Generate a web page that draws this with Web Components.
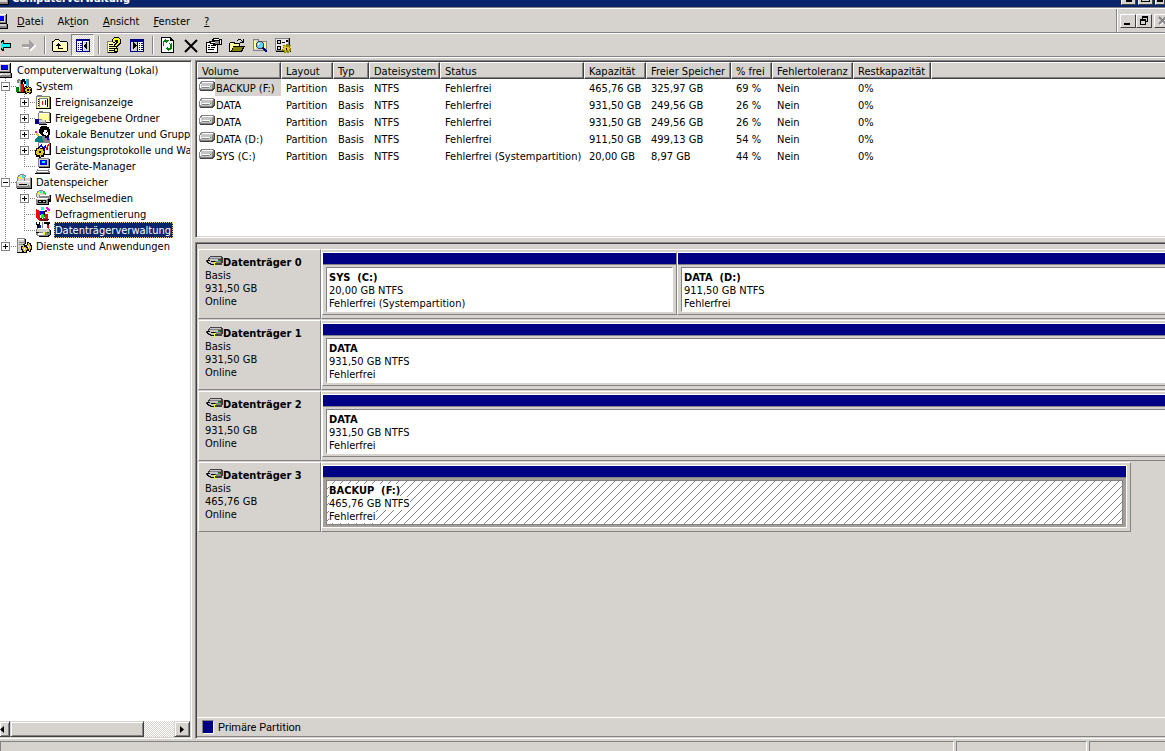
<!DOCTYPE html>
<html lang="de">
<head>
<meta charset="utf-8">
<title>Computerverwaltung</title>
<style>
  html, body {
    margin: 0;
    height: 100%;
    overflow: hidden;
  }
  body {
    --face: #d6d3ce;
    --shadow: #848284;
    --dark: #424142;
    --navy: #08246b;
    --disk: #000084;
    background: var(--face);
    color: #000;
    font: 11px/13px "DejaVu Sans Condensed", "Noto Sans", sans-serif;
    cursor: default;
  }
</style>
</head>
<body>
<management-console></management-console>

<script>
const ICONS = {
  computer: `
    <path fill="#848284" d="M2 1h11v9H2z"/><path fill="#d6d3ce" d="M3 1h9v8H3z"/><path fill="#000" d="M13 1h1v10h-1zM3 10h11v1H3z"/>
    <path fill="#fff" d="M2 1h11v1H2z"/><path fill="#000084" d="M4 3h7v5H4z"/><path fill="#0000ff" d="M5 3h6v4H5z"/>
    <path fill="#848284" d="M1 11h13v4H1z"/><path fill="#d6d3ce" d="M1 11h12v2H1z"/><path fill="#000" d="M1 15h14v1H1zM14 11h1v4h-1z"/><path fill="#fff" d="M2 12h3v1H2z"/>`,
  back: `<path fill="#000" d="M6 3h2v3h7v5H8v3H6v-1H5v-1H4v-1H3v-1H2V9H1V8h1V7h1V6h1V5h1V4h1z"/><path fill="#00ffff" d="M6 5h1v2h7v3H7v2H6v-1H5v-1H4V9H3V8h1V7h1V6h1z"/>`,
  forward: `<path fill="#fff" d="M9 4h1v1h1v1h1v1h1v1h2v2h-1v1h-1v1h-1v1h-1v1H9v-3H2v-2h7z"/><path fill="#a5a2a5" d="M8 3h1v1h1v1h1v1h1v1h1v2h-1v1h-1v1h-1v1H9v1H8v-3H1V7h7z"/>`,
  up: `<path fill="#000" d="M2 3h1V2h4v1h1v1h7v1h1v9h-1v1H1v-1H0V4h2z"/><path fill="#ffffb5" d="M3 3h4v1h1v1h7v9H1V5h1V4h1z"/><path fill="#fff" d="M2 5h12v1H2zM1 6h1v7H1z"/><path fill="#000" d="M6 6h1v1h1v1h1v1H7v2h4v1H6V9H4V8h1V7h1z"/>`,
  tree: `<path fill="#000084" d="M1 2h14v13H1z"/><path fill="#fff" d="M2 4h5v10H2zM8 4h6v10H8z"/><path fill="#d6d3ce" d="M9 5h5v9H9z"/><path fill="#000084" d="M3 6h1v1H3zM5 6h2v1H5zM3 8h1v1H3zM5 8h2v1H5zM3 10h1v1H3zM5 10h2v1H5zM3 12h1v1H3zM5 12h2v1H5z"/><path fill="#000" d="M12 5v7h-1v-1h-1v-1H9V8h1V7h1V5z"/>`,
  help: `<path fill="#848284" d="M1 4h9v12H1z"/><path fill="#ffffb5" d="M2 5h8v10H2z"/><path fill="#000" d="M10 8h1v8H2v-1h8zM3 7h4v1H3zM3 9h5v1H3zM3 11h5v1H3zM3 13h5v1H3z"/>
    <path fill="#000" d="M8 0h5v1h1v1h1v5h-1v1h-1v1h-1v1H8V7h1V6h1V5H9v1H7V5H6V2h1V1h1z"/><path fill="#ffff00" d="M8 1h5v1h1v4h-1v1h-1v1h-1v1H9V8h1V7h1V6h1V3H9v2H7V2h1z"/><path fill="#000" d="M8 11h4v4H8z"/><path fill="#ffff00" d="M9 12h2v2H9z"/>`,
  pane: `<path fill="#000084" d="M1 2h14v13H1z"/><path fill="#d6d3ce" d="M2 5h6v9H2z"/><path fill="#fff" d="M9 5h5v9H9z"/><path fill="#000" d="M4 5h1v1h1v1h1v1h1v1H7v1H6v1H5v1H4z"/><path fill="#000084" d="M10 6h1v1h-1zM12 6h2v1h-2zM10 8h1v1h-1zM12 8h2v1h-2zM10 10h1v1h-1zM12 10h2v1h-2zM10 12h1v1h-1zM12 12h2v1h-2z"/>`,
  refresh: `<path fill="#000" d="M1 0h10v1h1v1h1v1h1v13H1z"/><path fill="#fff" d="M2 1h8v3h3v11H2z"/><path fill="#008200" d="M8 2v1H6V2H5v1H4v1H3v5h1V5h2v1h1V5h1V4h1V3H8zM9 6h1v1h1V6h1v6h-1v1H9v1H8v-1H7v-1H6v-1h1v-1h1v1h2V7H9z"/><path fill="#000" d="M10 1h1v2h2v1h-3z"/>`,
  remove: `<path d="M2 3l12 12M14 3L2 15" stroke="#000" stroke-width="2" fill="none" shape-rendering="auto"/>`,
  props: `<path fill="#000" d="M0 5h12v11H0z"/><path fill="#fff" d="M1 6h10v9H1z"/><path fill="#000" d="M2 8h2v1H2zM5 8h4v1H5zM2 10h2v1H2zM5 10h4v1H5zM2 12h6v1H2z"/><path fill="#000" d="M7 1h6v1h3v6h-3V8h-3v1H7V7H4V6H3V4h3V2h1z"/><path fill="#fff" d="M8 2h5v1H8zM5 5h4v1H5zM14 3h1v4h-1z"/><path fill="#848284" d="M9 4h4v3H9z"/>`,
  open: `<path fill="#000" d="M1 5h5v1h5v3h5v1h-1v2h-1v2h-1v1H0V6h1z"/><path fill="#ffff9c" d="M1 6h4v1h5v2H4v2H3v2H2v1H1z"/><path fill="#848200" d="M4 10h10v1h-1v2h-1v1H3v-1h1z"/><path fill="#000" d="M9 2h3v1h1v1h1V2h1v4h-4V5h2V4h-1V3H9v1H8V3h1z"/>`,
  find: `<path fill="#848284" d="M1 2h6v2h8v10H1z"/><path fill="#d6d3ce" d="M2 3h4v2h8v8H2z"/><path fill="#ffff9c" d="M2 4h2v8H2zM12 5h2v6h-2z"/><circle cx="8" cy="8" r="4" fill="#424142"/><circle cx="8" cy="8" r="3" fill="#63cfff"/><path fill="#fff" d="M6 6h2v1H7v1H6z"/><path d="M11 11l4 4" stroke="#000084" stroke-width="2"/>`,
  settings: `<path fill="#848284" d="M0 1h14v13H0z"/><path fill="#e7e7e7" d="M1 2h12v11H1z"/><path fill="#000" d="M14 1h1v7h-1zM1 14h8v1H1zM2 3h4v4H2zM7 5h3v1H7zM2 9h4v4H2zM11 3h2v2h-2z"/><path fill="#d6d3ce" d="M3 4h2v2H3zM3 10h2v2H3z"/><path fill="#848200" d="M8 8h2v1h1V7h2v1h2V8h1v1h-1v2h1v3h-2v2h-2v-1h-1v1h-2v-2H7v-2h1z"/><path fill="#e7c321" d="M8 9h2V8h1v2h3v1h1v1h-1v2h-1v-1h-2v2h-1v-2H8v-2h1z"/><path fill="#000" d="M11 11h1v2h-1zM7 14h1v1H7zM15 14h1v1h-1z"/>`,
  system: `<path fill="#848284" d="M2 1h2v1h2v3H5v9H3V5H1V2h1z"/><path fill="#d6d3ce" d="M3 3h1v10H3z"/><path fill="#008200" d="M0 9h3v5H0z"/><path fill="#f00" d="M5 6h3v9H5z"/><path fill="#840000" d="M7 7h1v8H7z"/><path fill="#000" d="M6 1h3v2h1v3H8V4H7v2H5V2h1zM1 14h8v1H1z"/><path fill="#0cf" d="M10 1h1v7h-1z"/><path fill="#848284" d="M11 1h2v7h-2z"/><path fill="#000" d="M8 9h1V8h2v1h1V8h1v1h2v1h1v5h-1v1h-2v-1h-2v1H9v-2H8z"/><path fill="#e7c321" d="M9 9h1v1h2V9h1v1h2v1h-1v2h1v1h-1v1h-1v-1h-2v1h-1v-2H9v-2h1v-1H9z"/><path fill="#000" d="M11 11h2v2h-2z"/>`,
  events: `<path fill="#848284" d="M1 2h1V1h5v1h8v12H1z"/><path fill="#ffff9c" d="M2 3h12v11H2z"/><path fill="#000" d="M15 3h1v12H1v-1h14z"/><path fill="#848284" d="M4 4h9v9H4z"/><path fill="#fff" d="M5 5h8v8H5z"/><path fill="#000" d="M3 5h1v1H3zM3 7h1v1H3zM3 9h1v1H3zM3 11h1v1H3zM12 5h1v8h-1z"/><path fill="#f00" d="M7 7h1v4H7z"/><path fill="#00f" d="M10 6h1v5h-1z"/>`,
  share: `<path fill="#848284" d="M3 3h1V1h4v1h7v9H3z"/><path fill="#ffff9c" d="M4 3h10v8H4z"/><path fill="#fff" d="M4 3h10v1H4z"/><path fill="#000" d="M15 3h1v10H8v-1h7z"/><path fill="#000084" d="M0 9h4v5H0z"/><path fill="#848284" d="M4 9h3v1h4v4H4z"/><path fill="#d6d3ce" d="M4 10h6v2H4z"/><path fill="#000" d="M4 14h8v1H4z"/>`,
  users: `<path fill="#000" d="M6 0h6v1h2v2h1v6h-1v2h-2v1H9l-3-3-2-2V3h1V1h1z"/><path fill="#fff" d="M9 4h3v2h1v3h-1v1h-1V9H9V8H8V6h1z"/><path fill="#000" d="M11 6h1v1h-1z"/><path fill="#f0f" d="M0 5h2v2H0z"/><path fill="#e7c321" d="M1 7h2v1h1v2h1v1H3v-1H2V9H1z"/><path fill="#008284" d="M0 13l3-3h3l3 3v3H0z"/><path fill="#848284" d="M7 10h3v2h3v1h2v3H8z"/><path fill="#00f" d="M12 11h2v3h-2z"/>`,
  perf: `<path fill="#848284" d="M3 0h12v12H3z"/><path fill="#fff" d="M4 1h10v11H4z"/><path fill="#000" d="M15 1h1v12H9v-1h6z"/><path fill="#00f" d="M4 4h1V3h1V2h1v2h1v2h1V4h1V3h1v4h1V5h1v3h-2V6h-1v2H8V6H7V5H5v1H4z"/><path fill="#f00" d="M11 5h1V3h1V2h1v2h-1v2h-1v2h-1z"/><path fill="#000" d="M1 6h2V5h2v1h2V5h2v3h1v5H9v2H6v1H4v-1H1v-2H0V8h1z"/><path fill="#e7c321" d="M2 7h2V6h1v1h3v2h1v2H8v2H6v2H5v-2H2v-1H1V9h1z"/><path fill="#000" d="M4 9h2v2H4z"/>`,
  devices: `<path fill="#848284" d="M3 0h11v9H3z"/><path fill="#d6d3ce" d="M4 1h9v7H4z"/><path fill="#00f" d="M5 2h7v5H5z"/><path fill="#0ff" d="M7 3h3v2H7z"/><path fill="#000" d="M14 1h1v9H4V9h10z"/><path fill="#848284" d="M2 11h12v2H2zM1 13h14v2H1z"/><path fill="#fff" d="M3 11h10v1H3zM2 13h11v1H2z"/><path fill="#000" d="M0 15h15v1H0z"/>`,
  storage: `<circle cx="6" cy="5" r="5" fill="#848284"/><circle cx="6" cy="5" r="4" fill="#d6d3ce"/><path fill="#ff0" d="M2 3h3v2H3z"/><path fill="#0ff" d="M6 1h2v3H6z"/><path fill="#848284" d="M8 3h7v4H8z"/><path fill="#d6d3ce" d="M9 4h5v3H9z"/><path fill="#fff" d="M9 3h5v1H9z"/><path fill="#848284" d="M0 7h15v7H0z"/><path fill="#d6d3ce" d="M1 8h13v4H1z"/><path fill="#fff" d="M1 7h13v1H1z"/><path fill="#000" d="M15 4h1v11H1v-1h14zM3 10h8v1H3z"/><path fill="#008200" d="M12 11h1v1h-1z"/>`,
  removable: `<circle cx="6" cy="5" r="5" fill="#848284"/><circle cx="6" cy="5" r="4" fill="#d6d3ce"/><path fill="#ff0" d="M3 2h2v2H3z"/><path fill="#0f0" d="M8 2h2v2H8z"/><path fill="#0ff" d="M5 1h2v2H5z"/><path fill="#848284" d="M4 5h11v4H4zM1 8h12v7H1z"/><path fill="#d6d3ce" d="M2 9h10v1H2z"/><path fill="#fff" d="M5 5h9v1H5zM1 8h12v1H1z"/><path fill="#000" d="M15 5h1v7h-2v3H2v-1h11V9h2zM3 10h8v3H3z"/><path fill="#d6d3ce" d="M4 11h2v1H4zM8 11h2v1H8z"/>`,
  defrag: `<path fill="#f00" d="M1 3l4 2v10l-4-3z"/><path fill="#840000" d="M5 13h8v2H5z"/><path fill="#00f" d="M5 5h4v4H5z"/><path fill="#0f0" d="M6 8h3v4H6z"/><path fill="#008200" d="M8 8h3v5H8v-1h2z"/><path fill="#f00" d="M10 8h3v5h-2v-3h-1z"/><path fill="#0ff" d="M6 1h3v3H6z"/><path fill="#f0f" d="M11 1h2v1h1v1h1v2h-2V4h-1V3h-1z"/><path fill="#000" d="M9 5h1v4H9zM5 12h2v1H5zM13 13h1v1h-1z"/><path fill="#ff0" d="M12 6h3v1h-3z"/><path fill="#840084" d="M10 4h2v2h-2z"/>`,
  diskmgmt: `<path fill="#000" d="M1 0h1v2h2V0h1v3H4v3H2V3H1z"/><path fill="#00f" d="M4 3h2v4H4z"/><path fill="#848284" d="M7 0h1v6H7z"/><path fill="#f00" d="M12 3h2v4h-2z"/><path fill="#000" d="M9 0h6v2h-1v1h-2V2H9z"/><path fill="#848284" d="M2 6h12v1h1v6h-1v1H2v-1H1V7h1z"/><path fill="#d6d3ce" d="M2 7h12v3H2z"/><path fill="#fff" d="M3 6h10v1H3z"/><path fill="#000" d="M15 8h1v5h-1v1h-1v1H4v-1h9v-1h2zM1 10h3v1H1z"/><path fill="#fff" d="M3 11h5v2H3z"/><path fill="#ff0" d="M8 10h2v3H8z"/><path fill="#008200" d="M12 10h2v1h-2z"/>`,
  services: `<path fill="#848284" d="M1 0h8v14H1z"/><path fill="#d6d3ce" d="M2 1h6v13H2z"/><path fill="#fff" d="M2 1h6v1H2z"/><path fill="#848284" d="M3 4h5v1H3zM3 6h5v1H3z"/><path fill="#000" d="M1 14h8v1H1zM9 1h1v5H9z"/><path fill="#000" d="M5 8h2V6h2v1h2V4h2v1h2v2h1v5h-1v2h-2v-1h-2v2H8v-1H6v-2H5z"/><path fill="#e7c321" d="M6 9h1V7h1v2h2v1h1v2h-1v2H8v-1H7v-2H6zM12 5h1v1h1v2h1v3h-1v2h-1v-2h-1V9h-1V7h1z"/><path fill="#fff" d="M8 10h1v2H8zM12 8h1v2h-1z"/>`
};

// Flat grey drive, used in front of every volume
const DRIVE = `<svg width="16" height="11" viewBox="0 0 16 11" shape-rendering="crispEdges" aria-hidden="true">
  <path fill="#848284" d="M2 0h13v1h1v7h-1v1h-1v1H1V9H0V3h1V1h1z"/><path fill="#fff" d="M3 1h11v1H3zM1 3h1v4H1z"/>
  <path fill="#c6c3c6" d="M2 2h12v1h-1v5H2z"/><path fill="#848284" d="M3 6h7v1H3z"/><path fill="#fff" d="M3 5h8v1H3z"/>
  <path fill="#00c300" d="M11 5h1v1h-1z"/><path fill="#424142" d="M15 1h1v7h-1v1h-1v1H1V9h12V8h1V7h1z"/></svg>`;

const DISK = `<svg width="17" height="12" viewBox="0 0 17 12" shape-rendering="crispEdges" aria-hidden="true">
  <path fill="#424142" d="M4 0h12v1h1v6h-1v2H4V8H2V6H0V4h2V2h1V1h1z"/><path fill="#c6c3c6" d="M4 1h11v1H4zM3 3h9v2H3z"/>
  <path fill="#848284" d="M4 2h11v1H4zM10 5h5v2h-5z"/><path fill="#000" d="M1 4h3v1h5v4H5V8H3V7H1z"/><path fill="#c6c3c6" d="M2 5h3v1h3v2H5V7H3V6H2z"/>
  <path fill="#ff0" d="M8 6h1v4H8zM9 6h1v1H9z"/><path fill="#00c300" d="M12 4h2v1h-2z"/></svg>`;

class PixelIcon extends HTMLElement {
  connectedCallback() {
    this.attachShadow({ mode: 'open' }).innerHTML = `
      <style>
        :host { display: block; flex: none; width: 16px; height: 16px; }
        svg { display: block; }
      </style>
      <svg width="16" height="16" viewBox="0 0 16 16" shape-rendering="crispEdges" aria-hidden="true">${ICONS[this.getAttribute('name')]}</svg>`;
  }
}
customElements.define('pixel-icon', PixelIcon);

class TitleBar extends HTMLElement {
  constructor() {
    super();
    this.attachShadow({ mode: 'open' }).innerHTML = `
      <style>
        :host {
          display: flex;
          align-items: flex-end;
          height: 7px;
          overflow: hidden;
          background: var(--navy);
          color: #fff;
        }
        .logo { width: 10px; display: flex; justify-content: flex-end; margin-bottom: 2px; }
        h1 { flex: 1; margin: 0 0 2px 2px; font-size: 11px; line-height: 13px; font-weight: bold; }
        .buttons { display: flex; gap: 2px; margin-bottom: 2px; }
        button {
          width: 15px;
          height: 14px;
          padding: 0;
          display: flex;
          align-items: flex-end;
          justify-content: center;
          background: var(--face);
          border: 1px solid #fff;
          border-right-color: var(--dark);
          border-bottom-color: var(--dark);
        }
        .close { width: 10px; }
        i { width: 6px; height: 2px; margin-bottom: 2px; background: #000; }
        .max i { width: 9px; height: 8px; box-sizing: border-box; background: none; border: 1px solid #000; }
      </style>
      <div class="logo"><pixel-icon name="computer"></pixel-icon></div>
      <h1>Computerverwaltung</h1>
      <div class="buttons">
        <button aria-label="Minimieren"><i></i></button>
        <button class="max" aria-label="Maximieren"><i></i></button>
        <button class="close" aria-label="Schließen"><i></i></button>
      </div>`;
  }
}
customElements.define('title-bar', TitleBar);

class MenuBar extends HTMLElement {
  constructor() {
    super();
    this.attachShadow({ mode: 'open' }).innerHTML = `
      <style>
        :host {
          display: flex;
          height: 23px;
          margin-top: 1px;
          border-top: 1px solid #fff;
          border-bottom: 1px solid var(--shadow);
          box-shadow: 0 -1px var(--shadow);
        }
        .logo { width: 9px; display: flex; align-items: center; justify-content: flex-end; overflow: hidden; }
        nav { flex: 1; display: flex; align-items: center; padding: 1px 0 0 1px; }
        button { font: inherit; padding: 0; border: 0; background: none; color: inherit; }
        nav button { padding: 2px 7px; }
        .window {
          display: flex;
          align-items: center;
          padding-left: 3px;
          border-left: 1px solid var(--shadow);
          box-shadow: inset 1px 0 #fff;
        }
        .window button {
          box-sizing: border-box;
          width: 16px;
          height: 14px;
          border: 1px solid #fff;
          border-right-color: var(--dark);
          border-bottom-color: var(--dark);
        }
        .window .close { width: 11px; margin-left: 2px; border-right: 0; }
        svg { display: block; }
      </style>
      <div class="logo"><pixel-icon name="computer"></pixel-icon></div>
      <nav>
        <button><u>D</u>atei</button>
        <button>Ak<u>t</u>ion</button>
        <button><u>A</u>nsicht</button>
        <button><u>F</u>enster</button>
        <button><u>?</u></button>
      </nav>
      <div class="window">
        <button aria-label="Minimieren"><svg width="14" height="12"><path d="M3 8h6v2H3z"/></svg></button>
        <button aria-label="Wiederherstellen"><svg width="14" height="12" shape-rendering="crispEdges"><path d="M5 1h6v6H9V6h1V3H6v1H5zM3 4h6v6H3zm1 2v3h4V6z" fill-rule="evenodd"/></svg></button>
        <button class="close" aria-label="Schließen"><svg width="10" height="12"><path d="M5 3l7 7M12 3l-7 7" stroke="#fff" stroke-width="2"/><path d="M4 2l7 7M11 2l-7 7" stroke="#848284" stroke-width="2"/></svg></button>
      </div>`;
  }
}
customElements.define('menu-bar', MenuBar);

class ToolBar extends HTMLElement {
  constructor() {
    super();
    const button = (name, label, cls = '') =>
      `<button class="${cls}" aria-label="${label}"><pixel-icon name="${name}"></pixel-icon></button>`;
    this.attachShadow({ mode: 'open' }).innerHTML = `
      <style>
        :host {
          display: flex;
          align-items: center;
          height: 22px;
          border-top: 1px solid #fff;
          border-bottom: 1px solid var(--shadow);
          box-shadow: 0 1px #fff;
        }
        button {
          box-sizing: border-box;
          width: 23px;
          height: 22px;
          padding: 0;
          display: flex;
          align-items: center;
          justify-content: center;
          border: 1px solid transparent;
          background: none;
        }
        .cut { width: 17px; overflow: hidden; justify-content: flex-end; padding-right: 4px; }
        .on {
          border-color: var(--shadow) #fff #fff var(--shadow);
          background: repeating-conic-gradient(#fff 0 25%, var(--face) 0 50%) 0 0 / 2px 2px;
        }
        hr {
          width: 1px;
          height: 18px;
          margin: 0 3px 0 4px;
          border: 0;
          background: var(--shadow);
          box-shadow: 1px 0 #fff;
        }
      </style>
      ${button('back', 'Zurück', 'cut')}
      ${button('forward', 'Vorwärts')}
      <hr>
      ${button('up', 'Aufwärts')}
      ${button('tree', 'Konsolenstruktur', 'on')}
      <hr>
      ${button('help', 'Hilfe')}
      ${button('pane', 'Aktionsbereich')}
      <hr>
      ${button('refresh', 'Aktualisieren')}
      ${button('remove', 'Löschen')}
      ${button('props', 'Eigenschaften')}
      ${button('open', 'Öffnen')}
      ${button('find', 'Durchsuchen')}
      ${button('settings', 'Einstellungen')}`;
  }
}
customElements.define('tool-bar', ToolBar);

// level 0-2, state is plus or minus, "last" ends the guide line of its level
class TreeItem extends HTMLElement {
  connectedCallback() {
    const level = Number(this.getAttribute('level'));
    const state = this.getAttribute('state');
    const last = this.hasAttribute('last') ? 'last' : '';
    const box = state ? `<button class="${state}" aria-label="Auf- oder zuklappen"></button>` : '';
    let guides = '';
    if (level === 2) guides += '<span class="guide pass"></span>';
    if (level > 0) guides += `<span class="guide node ${last}">${box}</span>`;
    this.attachShadow({ mode: 'open' }).innerHTML = `
      <style>
        :host { display: flex; height: 16px; align-items: center; white-space: nowrap; }
        .guide {
          --dots: repeating-linear-gradient(#848284 0 1px, transparent 1px 2px);
          flex: none;
          display: flex;
          align-items: center;
          height: 16px;
          background: var(--dots) 5px 0 / 1px 16px no-repeat;
        }
        .pass { width: 19px; }
        .node {
          width: 16px;
          background:
            var(--dots) 5px 0 / 1px 16px no-repeat,
            repeating-linear-gradient(90deg, #848284 0 1px, transparent 1px 2px) 5px 8px / 11px 1px no-repeat;
        }
        .node.last {
          background:
            var(--dots) 5px 0 / 1px 8px no-repeat,
            repeating-linear-gradient(90deg, #848284 0 1px, transparent 1px 2px) 5px 8px / 11px 1px no-repeat;
        }
        button {
          box-sizing: border-box;
          width: 9px;
          height: 9px;
          margin: 1px 0 0 1px;
          padding: 0;
          border: 1px solid #848284;
          background: linear-gradient(#000, #000) 1px 3px / 5px 1px no-repeat #fff;
        }
        .plus {
          background:
            linear-gradient(#000, #000) 1px 3px / 5px 1px no-repeat,
            linear-gradient(#000, #000) 3px 1px / 1px 5px no-repeat #fff;
        }
        .icon { flex: none; width: ${level ? 16 : 13}px; display: flex; justify-content: flex-end; overflow: hidden; }
        .text { box-sizing: border-box; height: 16px; margin-left: 3px; padding: 1px 2px 0 1px; line-height: 15px; }
        :host([selected]) .text { background: var(--navy); color: #fff; outline: 1px dotted #e7c384; outline-offset: -1px; }
      </style>
      ${guides}<span class="icon"><pixel-icon name="${this.getAttribute('icon')}"></pixel-icon></span>
      <span class="text"><slot></slot></span>`;
  }
}
customElements.define('tree-item', TreeItem);

class ConsoleTree extends HTMLElement {
  constructor() {
    super();
    this.attachShadow({ mode: 'open' }).innerHTML = `
      <style>
        :host {
          display: flex;
          flex-direction: column;
          min-width: 0;
          background: #fff;
          border-top: 1px solid var(--shadow);
          border-right: 1px solid #fff;
          border-bottom: 1px solid #fff;
          box-shadow: inset 0 1px var(--dark), inset -1px -1px var(--face);
        }
        .items { flex: 1; margin: 1px 1px 0 0; overflow: hidden; }
        .scroll {
          display: grid;
          grid-template-columns: 10px 134px 1fr 16px;
          height: 16px;
          margin: 0 1px 1px 0;
          background: repeating-conic-gradient(#fff 0 25%, var(--face) 0 50%) 0 0 / 2px 2px;
        }
        .scroll button, .thumb {
          padding: 0;
          display: flex;
          align-items: center;
          justify-content: center;
          background: var(--face);
          border: 1px solid var(--face);
          border-right-color: var(--dark);
          border-bottom-color: var(--dark);
          box-shadow: inset 1px 1px #fff, inset -1px -1px var(--shadow);
        }
        .scroll button:first-child { border-left: 0; justify-content: flex-start; }
      </style>
      <div class="items">
        <tree-item level="0" icon="computer">Computerverwaltung (Lokal)</tree-item>
        <tree-item level="1" state="minus" icon="system">System</tree-item>
        <tree-item level="2" state="plus" icon="events">Ereignisanzeige</tree-item>
        <tree-item level="2" state="plus" icon="share">Freigegebene Ordner</tree-item>
        <tree-item level="2" state="plus" icon="users">Lokale Benutzer und Gruppe</tree-item>
        <tree-item level="2" state="plus" icon="perf">Leistungsprotokolle und War</tree-item>
        <tree-item level="2" last icon="devices">Geräte-Manager</tree-item>
        <tree-item level="1" state="minus" icon="storage">Datenspeicher</tree-item>
        <tree-item level="2" state="plus" icon="removable">Wechselmedien</tree-item>
        <tree-item level="2" icon="defrag">Defragmentierung</tree-item>
        <tree-item level="2" last selected icon="diskmgmt">Datenträgerverwaltung</tree-item>
        <tree-item level="1" last state="plus" icon="services">Dienste und Anwendungen</tree-item>
      </div>
      <div class="scroll">
        <button aria-label="Nach links"><svg width="4" height="7"><path d="M4 0v7L0 3.5z"/></svg></button>
        <div class="thumb"></div>
        <span></span>
        <button aria-label="Nach rechts"><svg width="4" height="7"><path d="M0 0v7l4-3.5z"/></svg></button>
      </div>`;
  }
}
customElements.define('console-tree', ConsoleTree);

class VolumeList extends HTMLElement {
  constructor() {
    super();
    const columns = [
      ['Volume', 84], ['Layout', 52], ['Typ', 36], ['Dateisystem', 71], ['Status', 144],
      ['Kapazität', 62], ['Freier Speicher', 85], ['% frei', 41], ['Fehlertoleranz', 81], ['Restkapazität', 78]
    ];
    const volumes = [
      ['BACKUP (F:)', 'Fehlerfrei', '465,76 GB', '325,97 GB', '69 %'],
      ['DATA', 'Fehlerfrei', '931,50 GB', '249,56 GB', '26 %'],
      ['DATA', 'Fehlerfrei', '931,50 GB', '249,56 GB', '26 %'],
      ['DATA (D:)', 'Fehlerfrei', '911,50 GB', '499,13 GB', '54 %'],
      ['SYS (C:)', 'Fehlerfrei (Systempartition)', '20,00 GB', '8,97 GB', '44 %']
    ];
    const row = ([name, status, size, free, percent], i) => `
      <tr class="${i === 0 ? 'current' : ''}">
        <td><div class="name">${DRIVE}<span>${name}</span></div></td>
        <td>Partition</td><td>Basis</td><td>NTFS</td><td>${status}</td>
        <td>${size}</td><td>${free}</td><td>${percent}</td><td>Nein</td><td>0%</td><td></td>
      </tr>`;
    this.attachShadow({ mode: 'open' }).innerHTML = `
      <style>
        :host {
          display: block;
          box-sizing: border-box;
          height: 178px;
          overflow: hidden;
          background: #fff;
          border-top: 1px solid var(--shadow);
          border-left: 1px solid var(--shadow);
          border-bottom: 1px solid #fff;
          box-shadow: inset 1px 1px var(--dark), inset 0 -1px var(--face);
          padding: 1px 0 0 1px;
        }
        table { width: 100%; table-layout: fixed; border-collapse: separate; border-spacing: 0; }
        th, td { height: 17px; box-sizing: border-box; text-align: left; font-weight: normal; white-space: nowrap; }
        th {
          padding: 2px 0 0 4px;
          line-height: 13px;
          background: var(--face);
          border: 1px solid #fff;
          border-right-color: var(--dark);
          border-bottom-color: var(--dark);
          box-shadow: inset -1px -1px var(--shadow);
        }
        th:last-child { border-right: 0; box-shadow: inset 0 -1px var(--shadow); }
        td { padding: 2px 0 0 5px; line-height: 15px; }
        td:first-child { padding: 0 0 0 2px; }
        .name { display: flex; height: 17px; line-height: 19px; }
        .name svg { flex: none; margin-top: 2px; }
        .name span { padding: 0 1px; flex: 1; }
        .current .name span { background: var(--face); }
      </style>
      <table>
        <colgroup>${columns.map(([, w]) => `<col style="width: ${w}px">`).join('')}<col></colgroup>
        <thead><tr>${columns.map(([name]) => `<th>${name}</th>`).join('')}<th></th></tr></thead>
        <tbody>${volumes.map(row).join('')}</tbody>
      </table>`;
  }
}
customElements.define('volume-list', VolumeList);

class DiskPartition extends HTMLElement {
  constructor() {
    super();
    this.attachShadow({ mode: 'open' }).innerHTML = `
      <style>
        :host {
          box-sizing: border-box;
          display: flex;
          flex-direction: column;
          flex: 1;
          height: 63px;
          border: 1px solid #fff;
          border-right-color: var(--shadow);
          border-bottom-color: var(--shadow);
        }
        :host([small]) { flex: 0 0 355px; }
        .bar { height: 11px; background: var(--disk); border-bottom: 1px solid var(--shadow); }
        .frame { flex: 1; display: flex; padding: 2px 3px; }
        .body {
          flex: 1;
          padding: 3px 2px 0;
          background: #fff;
          border: 1px solid #fff;
          border-top-color: var(--shadow);
          border-left-color: var(--shadow);
          white-space: nowrap;
        }
        .body div { height: 13px; }
        .body span { background: #fff; }
        .name { font-weight: bold; white-space: pre; }
        :host([selected]) { border-right-color: #fff; border-bottom-color: #fff; }
        :host([selected]) .frame { background: #a59e94; }
        :host([selected]) .body {
          border-color: var(--shadow);
          background: linear-gradient(135deg, #fff 46%, #848284 46% 54%, #fff 54%) 0 0 / 8px 8px;
        }
      </style>
      <div class="bar"></div>
      <div class="frame"><div class="body">
        <div class="name"><span><slot name="name"></slot></span></div>
        <div><span><slot name="size"></slot></span></div>
        <div><span><slot name="status"></slot></span></div>
      </div></div>`;
  }
}
customElements.define('disk-partition', DiskPartition);

class DiskRow extends HTMLElement {
  constructor() {
    super();
    this.attachShadow({ mode: 'open' }).innerHTML = `
      <style>
        :host { display: flex; height: 70px; margin: 0 -8px 1px 1px; }
        :host([short]) { margin-right: 34px; }
        .label, .graph {
          box-sizing: border-box;
          border: 1px solid #fff;
          border-right-color: var(--shadow);
          border-bottom-color: var(--shadow);
        }
        .label { flex: none; width: 123px; padding: 6px 0 0 6px; }
        .title { display: flex; height: 13px; }
        .title svg { flex: none; margin-left: 1px; }
        .title b { white-space: nowrap; }
        .label div { height: 13px; }
        .graph { flex: 1; display: flex; padding-top: 2px; }
        :host([short]) .graph { padding-right: 3px; }
      </style>
      <div class="label">
        <div class="title">${DISK}<b><slot name="title"></slot></b></div>
        <div>Basis</div>
        <div><slot name="capacity"></slot></div>
        <div>Online</div>
      </div>
      <div class="graph"><slot></slot></div>`;
  }
}
customElements.define('disk-row', DiskRow);

class DiskView extends HTMLElement {
  constructor() {
    super();
    const partition = (name, size, status, attrs = '') => `
      <disk-partition ${attrs}>
        <span slot="name">${name}</span><span slot="size">${size} NTFS</span><span slot="status">${status}</span>
      </disk-partition>`;
    const disk = (index, capacity, content, attrs = '') => `
      <disk-row ${attrs}>
        <span slot="title">Datenträger ${index}</span><span slot="capacity">${capacity}</span>${content}
      </disk-row>`;
    this.attachShadow({ mode: 'open' }).innerHTML = `
      <style>
        :host {
          display: flex;
          flex-direction: column;
          overflow: hidden;
          border-top: 1px solid var(--shadow);
          border-left: 1px solid var(--shadow);
          border-bottom: 1px solid #fff;
          box-shadow: inset 1px 1px var(--dark);
          padding: 1px 0 1px 1px;
        }
        .disks { flex: 1; padding-top: 5px; overflow: hidden; }
        .legend {
          display: flex;
          align-items: center;
          gap: 4px;
          height: 18px;
          padding-left: 5px;
          border-top: 1px solid #fff;
          border-bottom: 1px solid var(--shadow);
          font-family: Roboto, "Liberation Sans", sans-serif;
        }
        .swatch {
          box-sizing: border-box;
          width: 12px;
          height: 14px;
          background: var(--disk);
          border: 1px solid var(--shadow);
          border-right-color: #fff;
          border-bottom-color: #fff;
        }
      </style>
      <div class="disks">
        ${disk(0, '931,50 GB', partition('SYS  (C:)', '20,00 GB', 'Fehlerfrei (Systempartition)', 'small')
          + partition('DATA  (D:)', '911,50 GB', 'Fehlerfrei'))}
        ${disk(1, '931,50 GB', partition('DATA', '931,50 GB', 'Fehlerfrei'))}
        ${disk(2, '931,50 GB', partition('DATA', '931,50 GB', 'Fehlerfrei'))}
        ${disk(3, '465,76 GB', partition('BACKUP  (F:)', '465,76 GB', 'Fehlerfrei', 'selected'), 'short')}
      </div>
      <div class="legend"><span class="swatch"></span><span>Primäre Partition</span></div>`;
  }
}
customElements.define('disk-view', DiskView);

class StatusBar extends HTMLElement {
  constructor() {
    super();
    this.attachShadow({ mode: 'open' }).innerHTML = `
      <style>
        :host { display: grid; grid-template-columns: 1fr 131px 76px; gap: 2px; height: 10px; padding-top: 2px; }
        span { border-top: 1px solid var(--shadow); border-left: 1px solid var(--shadow); border-right: 1px solid #fff; }
        span:first-child { border-left: 0; }
        span:last-child { border-right: 0; }
      </style>
      <span></span><span></span><span></span>`;
  }
}
customElements.define('status-bar', StatusBar);

class ManagementConsole extends HTMLElement {
  constructor() {
    super();
    this.attachShadow({ mode: 'open' }).innerHTML = `
      <style>
        :host { display: flex; flex-direction: column; height: 100vh; }
        main {
          flex: 1;
          min-height: 0;
          display: grid;
          grid-template-columns: 192px 1fr;
          column-gap: 3px;
          margin-top: 3px;
        }
        .right { display: flex; flex-direction: column; min-width: 0; }
        disk-view { flex: 1; margin-top: 4px; min-height: 0; }
      </style>
      <title-bar></title-bar>
      <menu-bar></menu-bar>
      <tool-bar></tool-bar>
      <main>
        <console-tree></console-tree>
        <div class="right">
          <volume-list></volume-list>
          <disk-view></disk-view>
        </div>
      </main>
      <status-bar></status-bar>`;
  }
}
customElements.define('management-console', ManagementConsole);
</script>
</body>
</html>
